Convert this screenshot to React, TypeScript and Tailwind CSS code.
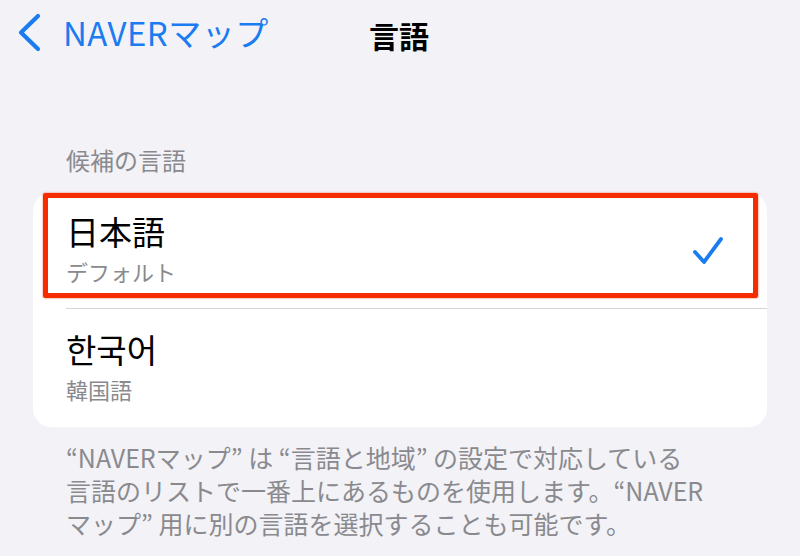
import { ReactNode } from 'react';

const jp = { fontFamily: '"Noto Sans CJK JP", "Noto Sans", sans-serif' };

function Chevron() {
    return (
        <svg width="28" height="40" viewBox="0 0 28 40" fill="none">
            <path d="M22 3 L5 19.5 L22 36" stroke="#1a7cf0" strokeWidth="4.2" strokeLinecap="round" strokeLinejoin="round" />
        </svg>
    );
}

function Check() {
    return (
        <svg width="34" height="32" viewBox="0 0 34 32" fill="none">
            <path d="M4 17 L13 27 L30 4" stroke="#1a7cf0" strokeWidth="3.8" strokeLinecap="round" strokeLinejoin="round" />
        </svg>
    );
}

interface RowProps {
    title: string;
    sub: string;
    right?: ReactNode;
    h: string;
}

function LangRow({ title, sub, right, h }: RowProps) {
    return (
        <div className={`flex items-center justify-between pl-[33px] pr-[42px] ${h}`}>
            <div className="flex flex-col -mt-[4px]">
                <span className="text-[33px] leading-[40px] text-black">{title}</span>
                <span className="text-[22px] leading-[30px] text-[#8a8a8e] mt-[5px]">{sub}</span>
            </div>
            {right}
        </div>
    );
}

export default function App() {
    return (
        <div className="w-[800px] h-[556px] bg-[#f2f2f7] overflow-hidden" style={jp}>
            {/* nav bar */}
            <div className="relative flex items-center h-[66px] pl-[16px]">
                <Chevron />
                <span className="ml-[19px] text-[33px] text-[#1a7cf0] tracking-[0.5px]">NAVERマップ</span>
                <span className="absolute left-[369px] top-[13px] text-[30px] font-bold text-black">言語</span>
            </div>

            <div className="pt-[79px] pl-[66px] text-[24px] leading-[30px] text-[#8a8a8e]">候補の言語</div>

            <div className="relative mx-[33px] mt-[18px] bg-white rounded-[18px]">
                <LangRow title="日本語" sub="デフォルト" right={<Check />} h="h-[115px]" />
                <div className="ml-[33px] h-px bg-[#d6d6da]" />
                <LangRow title="한국어" sub="韓国語" h="h-[118px]" />

                {/* red highlight box */}
                <div className="absolute left-[10px] right-[9px] top-0 h-[105px] border-[5px] border-[#f52c00] rounded-[2px] shadow-[0_0_2px_#ff5a30]" />
            </div>

            <p className="pl-[66px] pt-[14px] text-[25px] leading-[33px] text-[#8a8a8e]">
                “NAVERマップ” は “言語と地域” の設定で対応している<br />
                言語のリストで一番上にあるものを使用します。“NAVER<br />
                マップ” 用に別の言語を選択することも可能です。
            </p>
        </div>
    );
}
